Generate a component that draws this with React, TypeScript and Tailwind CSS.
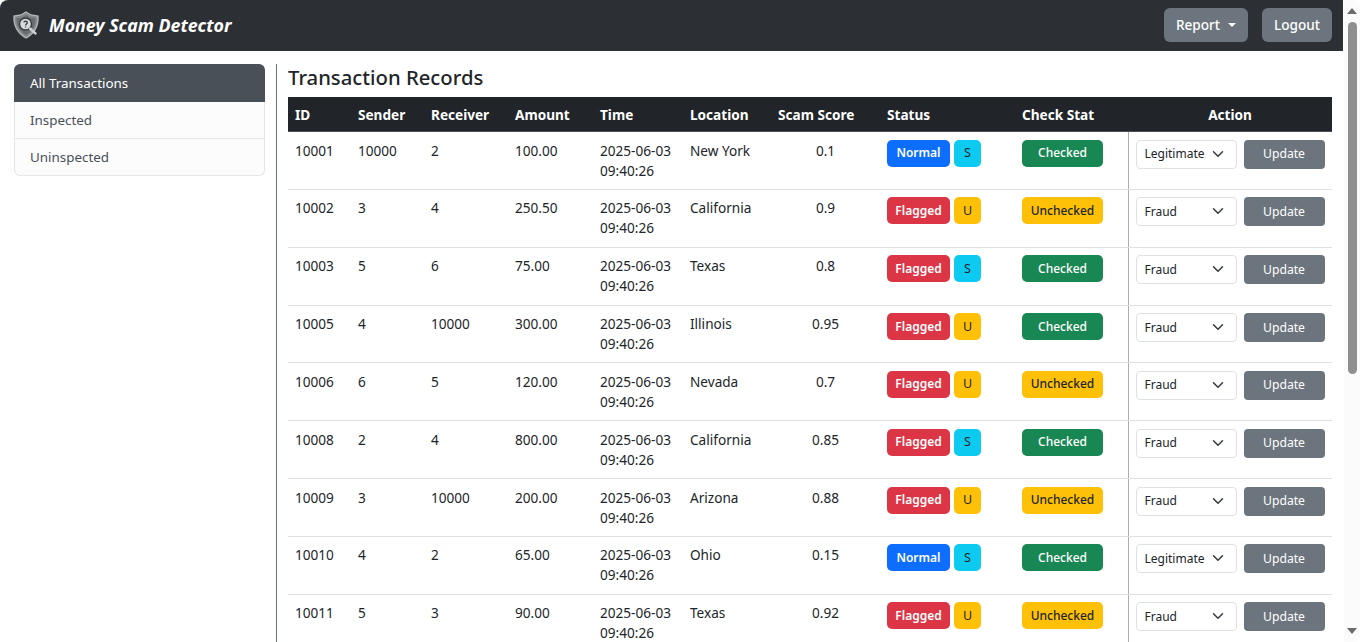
const rows = [
  ["10001", "10000", "2", "100.00", "New York", "0.1", "Normal", "S", "Checked", "Legitimate"],
  ["10002", "3", "4", "250.50", "California", "0.9", "Flagged", "U", "Unchecked", "Fraud"],
  ["10003", "5", "6", "75.00", "Texas", "0.8", "Flagged", "S", "Checked", "Fraud"],
  ["10005", "4", "10000", "300.00", "Illinois", "0.95", "Flagged", "U", "Checked", "Fraud"],
  ["10006", "6", "5", "120.00", "Nevada", "0.7", "Flagged", "U", "Unchecked", "Fraud"],
  ["10008", "2", "4", "800.00", "California", "0.85", "Flagged", "S", "Checked", "Fraud"],
  ["10009", "3", "10000", "200.00", "Arizona", "0.88", "Flagged", "U", "Unchecked", "Fraud"],
  ["10010", "4", "2", "65.00", "Ohio", "0.15", "Normal", "S", "Checked", "Legitimate"],
  ["10011", "5", "3", "90.00", "Texas", "0.92", "Flagged", "U", "Unchecked", "Fraud"],
];

function Logo() {
  return (
    <svg width="30" height="30" viewBox="0 0 30 30" className="mr-[7px] shrink-0">
      <path d="M14 2 L19 5 L26 6 C26.500 14 25 22 14 28 C4 22 1.500 14 2 6 L9 5 Z" fill="#85888b" stroke="#b4b6b8" strokeWidth="1.300" />
      <path d="M14 5 L18 7.500 L23.500 8 C23.500 14 22 20.500 14 25 C6.500 20.500 4.500 14 4.500 8 L10 7.500 Z" fill="#696c70" />
      <circle cx="13.500" cy="14" r="6" fill="#d9dadb" stroke="#3a3d41" strokeWidth="1.400" />
      <path d="M11.800 12.300 C12 10.800 15.300 10.800 15.300 12.700 C15.300 14 13.600 14 13.600 15.400 M13.600 16.500 V17.600" fill="none" stroke="#3f4246" strokeWidth="1.400" />
      <path d="M18 18.500 L23.500 23.500" stroke="#cfd0d2" strokeWidth="2.400" strokeLinecap="round" />
    </svg>
  );
}

function Chevron() {
  return (
    <svg viewBox="0 0 16 16" className="w-3 h-3 absolute right-[13px] top-[8px] pointer-events-none">
      <path d="m2 5 6 6 6-6" fill="none" stroke="#343a40" strokeWidth="2" strokeLinecap="round" strokeLinejoin="round" />
    </svg>
  );
}

function Row({ r }: { r: string[] }) {
  const td = "align-top pt-[8.500px] pb-[8.350px] px-[7px] border-b border-[#dee2e6]";
  return (
    <tr>
      <td className={td}>{r[0]}</td>
      <td className={td}>{r[1]}</td>
      <td className={td}>{r[2]}</td>
      <td className={td}>{r[3]}</td>
      <td className={td}>2025-06-03<br />09:40:26</td>
      <td className={td}>{r[4]}</td>
      <td className={td + " text-center"}>{r[5]}</td>
      <td className={td}>
        <div className="flex gap-1 -mt-[1px]">
          <span className={"w-[63px] h-[27px] rounded-[5px] flex items-center justify-center text-white font-semibold text-[12px] " + (r[6] === "Normal" ? "bg-[#0d6efd]" : "bg-[#dc3545]")}>{r[6]}</span>
          <span className={"w-[27px] h-[27px] rounded-[5px] flex items-center justify-center text-[#212529] text-[12.500px] " + (r[7] === "S" ? "bg-[#0dcaf0]" : "bg-[#ffc107]")}>{r[7]}</span>
        </div>
      </td>
      <td className={td}>
        <span className={"-mt-[1px] w-[81px] h-[27px] rounded-[5px] flex items-center justify-center font-medium text-[12px] " + (r[8] === "Checked" ? "bg-[#198754] text-white" : "bg-[#ffc107] text-[#212529]")}>{r[8]}</span>
      </td>
      <td className={td + " border-l border-l-[#adadad]"}>
        <div className="flex gap-[7px] -mt-[1px]">
          <div className="relative w-[101px] h-[29px]">
            <select defaultValue={r[9]} className="appearance-none w-full h-full border border-[#dee2e6] rounded-[4px] bg-white pl-2 text-[12px] text-[#212529]">
              <option>{r[9]}</option>
            </select>
            <Chevron />
          </div>
          <button className="w-[81px] h-[29px] rounded-[4px] bg-[#6c757d] text-white text-[12.200px]">Update</button>
        </div>
      </td>
    </tr>
  );
}

export default function App() {
  const heads = ["ID", "Sender", "Receiver", "Amount", "Time", "Location", "Scam Score", "Status", "Check Stat", "Action"];
  const widths = [63, 73, 84, 85, 90, 88, 109, 135, 113, 204];
  return (
    <div className="flex h-[642px] overflow-hidden bg-white text-[#212529] text-[13.600px] leading-[20px] font-['Noto_Sans','Open_Sans',sans-serif]">
      <div className="w-[1344px] shrink-0 flex flex-col">
        <nav className="h-[51px] shrink-0 mr-px bg-[#2c3035] rounded-tl-[8px] flex items-center justify-between pl-3 pr-[11px]">
          <div className="flex items-center -mt-px">
            <Logo />
            <span className="text-white font-bold italic text-[17.800px]">Money Scam Detector</span>
          </div>
          <div className="flex gap-[14px] mb-px">
            <button className="w-[84px] h-[34px] rounded-[6px] bg-[#6c757d] text-white font-medium text-[13.600px] flex items-center justify-center gap-[8px]">
              Report
              <span className="w-0 h-0 border-x-[4.500px] border-x-transparent border-t-[4.500px] border-t-white" />
            </button>
            <button className="w-[70px] h-[34px] rounded-[6px] bg-[#6c757d] text-white font-medium text-[13.600px]">Logout</button>
          </div>
        </nav>
        <div className="flex flex-1 min-h-0 pt-[13px]">
          <aside className="w-[276px] shrink-0 pl-[14px] pr-[11px]">
            <div className="text-[#495057] text-[13.400px]">
              <div className="h-[38px] rounded-t-[6px] bg-[#495057] text-white flex items-center pl-4">All Transactions</div>
              <div className="h-[37px] bg-[#fcfcfd] border-x border-b border-[#e4e7ea] flex items-center pl-[15px]">Inspected</div>
              <div className="h-[37px] bg-[#fcfcfd] border-x border-b border-[#e4e7ea] rounded-b-[6px] flex items-center pl-[15px]">Uninspected</div>
            </div>
          </aside>
          <main className="flex-1 min-w-0 border-l border-[#6c757d] pl-[11px] pr-3 overflow-hidden">
            <h1 className="h-[33px] pb-[7px] flex items-center text-[20.300px] font-medium text-[#212529]">Transaction Records</h1>
            <table className="w-[1044px] table-fixed border-collapse">
              <colgroup>
                {widths.map((w, i) => <col key={i} style={{ width: w }} />)}
              </colgroup>
              <thead>
                <tr className="h-[34.500px] bg-[#212529] text-white">
                  {heads.map((h) => (
                    <th key={h} className={"px-[7px] pt-[2px] font-bold text-[13.600px] border-b border-[#495057] " + (h === "Action" ? "text-center" : "text-left")}>{h}</th>
                  ))}
                </tr>
              </thead>
              <tbody>
                {rows.map((r) => <Row key={r[0]} r={r} />)}
              </tbody>
            </table>
          </main>
        </div>
      </div>
      <div className="w-4 shrink-0 bg-[#fbfbfb] flex flex-col items-center rounded-br-[8px] rounded-tr-[8px]">
        <span className="mt-[8px] w-0 h-0 border-x-[5px] border-x-transparent border-b-[6px] border-b-[#6b6b6b]" />
        <div className="mt-[8px] w-[9px] h-[352px] rounded-[5px] bg-[#8f8f8f]" />
        <div className="flex-1" />
        <span className="mb-[8px] w-0 h-0 border-x-[5px] border-x-transparent border-t-[6px] border-t-[#6b6b6b]" />
      </div>
    </div>
  );
}
